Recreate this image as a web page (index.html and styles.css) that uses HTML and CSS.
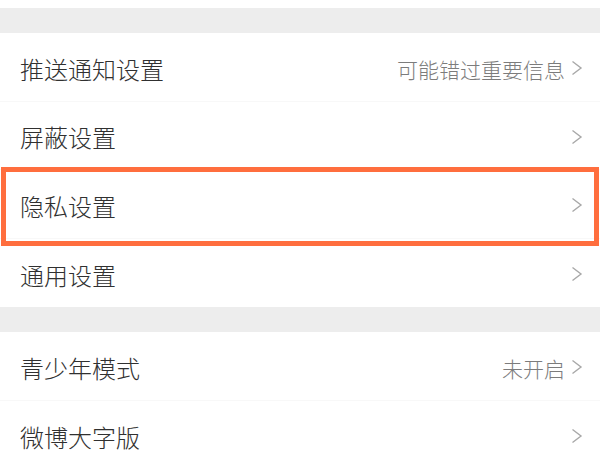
FILE: index.html
```html
<!DOCTYPE html>
<html lang="zh-CN">
<head>
<meta charset="utf-8">
<link rel="stylesheet" href="styles.css">
</head>
<body>
<div class="page">
  <div class="topstrip"></div>
  <div class="band"></div>
  <div class="group">
    <div class="row">
      <span class="label">推送通知设置</span>
      <span class="right"><span class="value">可能错过重要信息</span><svg class="chev" viewBox="0 0 12 16" width="12" height="16"><path d="M1.5 1.5 L10 8 L1.5 14.5" fill="none" stroke="#a8a8a8" stroke-width="1.4"/></svg></span>
    </div>
    <div class="row">
      <span class="label">屏蔽设置</span>
      <span class="right"><svg class="chev" viewBox="0 0 12 16" width="12" height="16"><path d="M1.5 1.5 L10 8 L1.5 14.5" fill="none" stroke="#a8a8a8" stroke-width="1.4"/></svg></span>
    </div>
    <div class="row">
      <span class="label">隐私设置</span>
      <span class="right"><svg class="chev" viewBox="0 0 12 16" width="12" height="16"><path d="M1.5 1.5 L10 8 L1.5 14.5" fill="none" stroke="#a8a8a8" stroke-width="1.4"/></svg></span>
      <div class="mark"></div>
    </div>
    <div class="row last">
      <span class="label">通用设置</span>
      <span class="right"><svg class="chev" viewBox="0 0 12 16" width="12" height="16"><path d="M1.5 1.5 L10 8 L1.5 14.5" fill="none" stroke="#a8a8a8" stroke-width="1.4"/></svg></span>
    </div>
  </div>
  <div class="band"></div>
  <div class="group">
    <div class="row">
      <span class="label">青少年模式</span>
      <span class="right"><span class="value">未开启</span><svg class="chev" viewBox="0 0 12 16" width="12" height="16"><path d="M1.5 1.5 L10 8 L1.5 14.5" fill="none" stroke="#a8a8a8" stroke-width="1.4"/></svg></span>
    </div>
    <div class="row last">
      <span class="label">微博大字版</span>
      <span class="right"><svg class="chev" viewBox="0 0 12 16" width="12" height="16"><path d="M1.5 1.5 L10 8 L1.5 14.5" fill="none" stroke="#a8a8a8" stroke-width="1.4"/></svg></span>
    </div>
  </div>
</div>
</body>
</html>
```
FILE: styles.css
```css
html, body {
  margin: 0;
  padding: 0;
  background: #ffffff;
}
body {
  font-family: "Noto Sans CJK SC", "Noto Sans", sans-serif;
  width: 600px;
  height: 450px;
  overflow: hidden;
}
.page {
  display: flex;
  flex-direction: column;
}
.topstrip {
  height: 8px;
  background: #ffffff;
}
.band {
  height: 25px;
  background: #ededed;
}
.group {
  display: flex;
  flex-direction: column;
  background: #ffffff;
}
.row {
  position: relative;
  height: 68.5px;
  box-sizing: border-box;
  padding: 4px 17px 0 20px;
  display: flex;
  align-items: center;
  justify-content: space-between;
  border-bottom: 1px solid #f8f8f8;
}
.row.last {
  border-bottom: none;
}
.label {
  font-size: 24px;
  font-weight: 300;
  color: #303030;
  line-height: 30px;
}
.right {
  display: flex;
  align-items: center;
  gap: 6px;
}
.value {
  font-size: 21px;
  font-weight: 300;
  color: #7c7c7c;
  line-height: 28px;
}
.chev {
  display: block;
  margin-top: -1px;
}
.mark {
  position: absolute;
  left: 1px;
  right: 1px;
  top: -3px;
  bottom: -8px;
  border: 5.5px solid #ff6e3e;
  pointer-events: none;
}
```
